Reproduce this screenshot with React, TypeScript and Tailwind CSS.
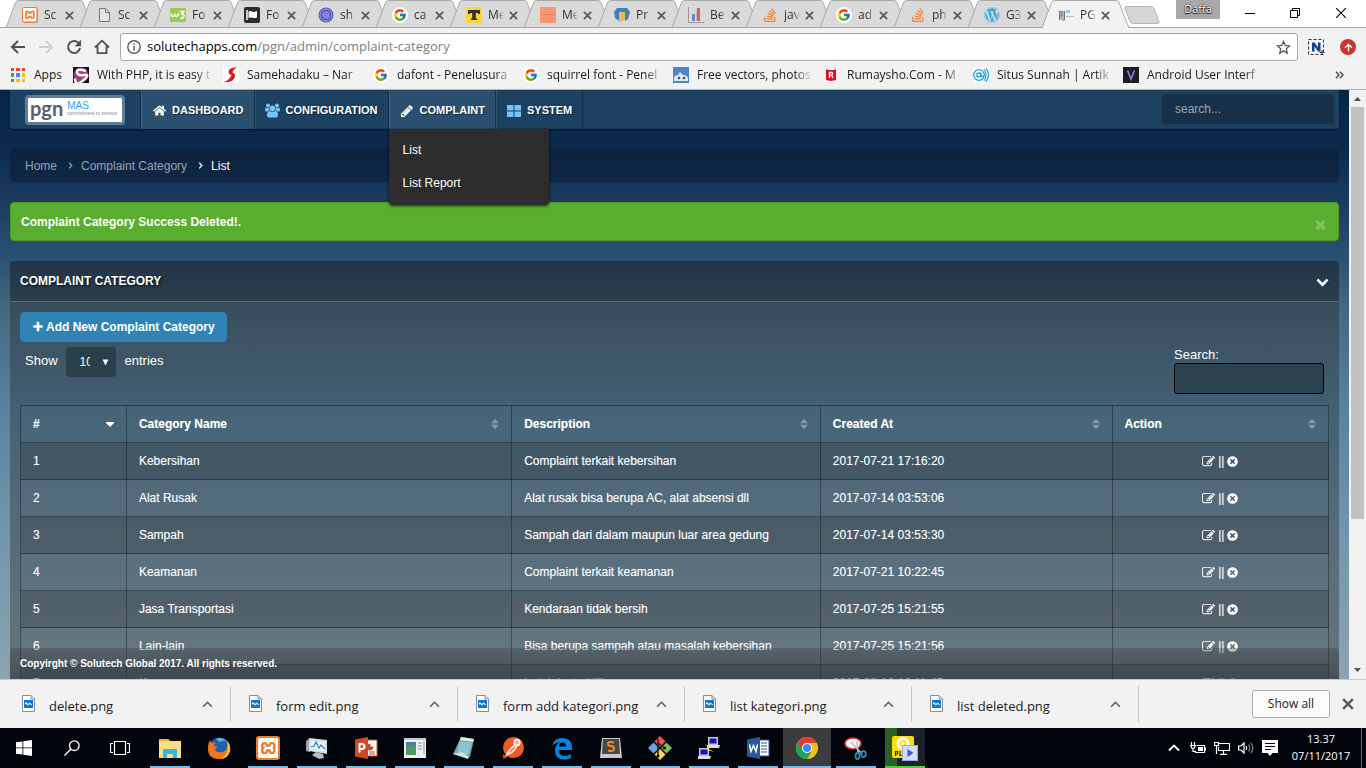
import React from "react";
import { FaArrowUp, FaHome, FaStackOverflow, FaTimesCircle, FaWordpress } from "react-icons/fa";
import { FcGoogle } from "react-icons/fc";
import { SiXampp } from "react-icons/si";

type IconProps = { className?: string };

/* ---------- small drawings ---------- */

const glyph = (d: string, viewBox = "0 0 1792 1792") =>
  function Glyph({ className }: IconProps) {
    return (
      <svg viewBox={viewBox} className={className} fill="currentColor" aria-hidden="true">
        <path d={d} />
      </svg>
    );
  };

const EditIcon = glyph(
  "M888 1184l116-116-152-152-116 116v56h96v96h56zm440-720q-16-16-33 1l-350 350q-17 17-1 33t33-1l350-350q17-17 1-33zm80 594v190q0 119-84.5 203.5t-203.5 84.5h-832q-119 0-203.5-84.5t-84.5-203.5v-832q0-119 84.5-203.5t203.5-84.5h832q63 0 117 25 15 7 18 23 3 17-9 29l-49 49q-14 14-32 8-23-6-45-6h-832q-66 0-113 47t-47 113v832q0 66 47 113t113 47h832q66 0 113-47t47-113v-126q0-13 9-22l64-64q15-15 35-7t20 29zm-96-738l288 288-672 672h-288v-288zm444 132l-92 92-288-288 92-92q28-28 68-28t68 28l152 152q28 28 28 68t-28 68z",
);
const TimesIcon = glyph(
  "M1490 1322q0 40-28 68l-136 136q-28 28-68 28t-68-28l-294-294-294 294q-28 28-68 28t-68-28l-136-136q-28-28-28-68t28-68l294-294-294-294q-28-28-28-68t28-68l136-136q28-28 68-28t68 28l294 294 294-294q28-28 68-28t68 28l136 136q28 28 28 68t-28 68l-294 294 294 294q28 28 28 68z",
);
const PlusIcon = glyph(
  "M1600 736v192q0 40-28 68t-68 28h-416v416q0 40-28 68t-68 28h-192q-40 0-68-28t-28-68v-416h-416q-40 0-68-28t-28-68v-192q0-40 28-68t68-28h416v-416q0-40 28-68t68-28h192q40 0 68 28t28 68v416h416q40 0 68 28t28 68z",
);
const ChevronDownIcon = glyph(
  "M1683 808l-742 741q-19 19-45 19t-45-19l-742-741q-19-19-19-45.5t19-45.5l166-165q19-19 45-19t45 19l531 531 531-531q19-19 45-19t45 19l166 165q19 19 19 45.5t-19 45.5z",
);
const UsersIcon = glyph(
  "M593 896q-162 5-265 128h-134q-82 0-138-40.5t-56-118.5q0-353 124-353 6 0 43.5 21t97.5 42.5 119 21.5q67 0 133-23-5 37-5 66 0 139 81 256zm1071 637q0 120-73 189.5t-194 69.5h-874q-121 0-194-69.5t-73-189.5q0-53 3.5-103.5t14-109 26.5-108.500 43-97.500 62-81 85.500-53.500 111.500-20q10 0 43 21.500t73 48 107 48 135 21.500 135-21.500 107-48 73-48 43-21.500q61 0 111.500 20t85.500 53.500 62 81 43 97.500 26.500 108.500 14 109 3.500 103.500zm-1024-1277q0 106-75 181t-181 75-181-75-75-181 75-181 181-75 181 75 75 181zm704 384q0 159-112.500 271.500t-271.500 112.500-271.500-112.500-112.500-271.500 112.500-271.500 271.500-112.500 271.500 112.500 112.500 271.500zm576 225q0 78-56 118.500t-138 40.500h-134q-103-123-265-128 81-117 81-256 0-29-5-66 66 23 133 23 59 0 119-21.500t97.500-42.500 43.500-21q124 0 124 353zm-128-609q0 106-75 181t-181 75-181-75-75-181 75-181 181-75 181 75 75 181z",
  "0 0 1920 1792",
);
const PencilIcon = glyph(
  "M491 1536l91-91-235-235-91 91v107h128v128h107zm523-928q0-22-22-22-10 0-17 7l-542 542q-7 7-7 17 0 22 22 22 10 0 17-7l542-542q7-7 7-17zm-54-192l416 416-832 832h-416v-416zm683 96q0 53-37 90l-166 166-416-416 166-165q36-38 90-38 53 0 91 38l235 234q37 39 37 91z",
);

const PageIcon = () => (
  <svg viewBox="0 0 16 16" className="size-4">
    <path d="M3.5 1.5h6l4 4v9h-10z" fill="#e4e4e4" stroke="#777" />
    <path d="M9.5 1.5v4h4" fill="none" stroke="#777" />
  </svg>
);

const XamppIcon = ({ className = "size-4" }: IconProps) => (
  <span className={`${className} flex items-center justify-center rounded-[3px] bg-[#f27a2c] text-white`}>
    <SiXampp className="size-[85%]" />
  </span>
);

const GoogleIcon = () => (
  <span className="flex size-4 items-center justify-center rounded-full bg-white">
    <FcGoogle className="size-[14px]" />
  </span>
);

const W3Icon = () => (
  <svg viewBox="0 0 16 16" className="size-4">
    <rect y="1" width="16" height="14" rx="1" fill="#9bcb52" />
    <path d="M1 6.500q.3 3 1.800 3T4.800 6.500q.2 3 1.800 3T8.500 6M10 4.500h4L11.800 7q2.500 0 2.200 2.200-.5 2-3.500 2" fill="none" stroke="#fff" strokeWidth="1.500" />
  </svg>
);

const FlagIcon = () => (
  <svg viewBox="0 0 16 16" className="size-4">
    <rect width="16" height="16" rx="2" fill="#2d2d2d" />
    <path d="M3 3v10" stroke="#fff" strokeWidth="1.500" />
    <path d="M4.500 4.500q2-1 3.500 0t5-.5v6.500q-3 1-4.500.3t-4 .2z" fill="#fff" />
  </svg>
);

const RingIcon = () => (
  <svg viewBox="0 0 16 16" className="size-4">
    <circle cx="8" cy="8" r="7.500" fill="#4c51b5" />
    <circle cx="8" cy="8" r="6" fill="none" stroke="#a9abdf" />
    <circle cx="8" cy="8" r="4" fill="#7f86e6" />
  </svg>
);

const LetterTIcon = () => (
  <svg viewBox="0 0 16 16" className="size-4">
    <rect width="16" height="16" fill="#fbd92c" />
    <path d="M2 3h12v4h-2V6H9.800v5.500H11V13H5v-1.500h1.200V6H4v1H2z" fill="#333" />
  </svg>
);

const SalmonIcon = () => (
  <svg viewBox="0 0 16 16" className="size-4">
    <rect width="16" height="16" fill="#ff9470" />
    <path d="M1 7.500h14" stroke="#c97e67" strokeDasharray="2 .5" />
  </svg>
);

const ShieldIcon = () => (
  <svg viewBox="0 0 16 16" className="size-4">
    <path d="M3 1h10l3 4-2 7-3 2V5H5v9l-4-3L0 5z" fill="#3d7fb9" />
    <path d="M5 5h6v7l-4 3H5z" fill="#f6b84b" />
  </svg>
);

const BarsIcon = () => (
  <svg viewBox="0 0 16 16" className="size-4">
    <path d="M.5 0v15.500H16" fill="none" stroke="#999" />
    <path d="M4 7h3v7H4z" fill="#5d8fd0" />
    <path d="M8 4h1v10H8z" fill="#bbb" />
    <path d="M9 1h3v13H9z" fill="#c7675f" />
  </svg>
);

const PgnFavicon = () => (
  <svg viewBox="0 0 16 16" className="size-4">
    <path d="M1 4h5v9H1z" fill="#b7bcc1" />
    <path d="M1.500 4v9M1.500 4.500h2.500v4.500H1.500M6.500 4v9H4.500" fill="none" stroke="#68737d" />
    <path d="M8 4.500h4" stroke="#8ecbea" strokeWidth="3" />
    <path d="M8 9.500h8" stroke="#bbb" />
  </svg>
);

const FileThumb = () => (
  <svg viewBox="0 0 13 17" className="h-[17px] w-[13px] shrink-0">
    <path d="M.5.5h8.500l3.500 3.500v12.500H.5z" fill="#fff" stroke="#8d8d8d" />
    <path d="M9 .5V4h3.500" fill="none" stroke="#8d8d8d" />
    <path d="M2 5h9v8H2z" fill="#0b78d7" />
    <path d="M3 9.500V7.500l1.500 0L6 9l1.500-1.500L10 9.500v.8L7.500 9 6 10.500 4.500 9z" fill="#fff" />
  </svg>
);

const Cross = ({ className }: IconProps) => (
  <svg viewBox="0 0 10 10" className={className}>
    <path d="M1 1l8 8M9 1L1 9" stroke="currentColor" strokeWidth="2" fill="none" />
  </svg>
);

const UpChevron = ({ className }: IconProps) => (
  <svg viewBox="0 0 12 8" className={className}>
    <path d="M1 6.500l5-5 5 5" stroke="currentColor" strokeWidth="1.800" fill="none" />
  </svg>
);

const GridIcon = () => (
  <svg viewBox="0 0 14 12" className="h-3 w-[14px]">
    <path d="M0 0h6.500v5.500H0zM7.500 0H14v5.500H7.500zM0 6.500h6.500V12H0zM7.500 6.500H14V12H7.500z" fill="currentColor" />
  </svg>
);

/* ---------- browser chrome ---------- */

const tabs: { label: string; icon: React.ReactNode }[] = [
  { label: "Sc", icon: <XamppIcon /> },
  { label: "Sc", icon: <PageIcon /> },
  { label: "Fo", icon: <W3Icon /> },
  { label: "Fo", icon: <FlagIcon /> },
  { label: "sh", icon: <RingIcon /> },
  { label: "ca", icon: <GoogleIcon /> },
  { label: "Me", icon: <LetterTIcon /> },
  { label: "Me", icon: <SalmonIcon /> },
  { label: "Pr", icon: <ShieldIcon /> },
  { label: "Be", icon: <BarsIcon /> },
  { label: "jav", icon: <FaStackOverflow className="size-4 text-[#f08838]" /> },
  { label: "ad", icon: <GoogleIcon /> },
  { label: "ph", icon: <FaStackOverflow className="size-4 text-[#f08838]" /> },
  { label: "G3", icon: <FaWordpress className="size-4 text-[#2fa9d8]" /> },
  { label: "PG", icon: <PgnFavicon /> },
];

function TabStrip() {
  return (
    <div className="flex h-7 shrink-0 bg-white shadow-[inset_0_-1px_0_#a5a5a5]">
      <div className="flex min-w-0 pl-[6px]" role="tablist">
        {tabs.map((tab, i) => {
          const active = i === tabs.length - 1;
          return (
            <div key={i} role="tab" aria-selected={active} className="relative flex h-7 w-[74px] shrink-0 items-center pl-4">
              <svg viewBox="0 0 88 28" className="absolute top-0 left-0 h-7 w-[88px]">
                <path d="M0 28L9.500 2.500Q10.500.5 12.500.5H74q2 0 3 2L87 28z" fill={active ? "#f2f2f2" : "#dadada"} />
                <path d="M0 28L9.500 2.500Q10.500.5 12.500.5H74q2 0 3 2L87 28" fill="none" stroke="#a9a9a9" />
                {!active && <path d="M0 27.500h88" stroke="#a5a5a5" />}
              </svg>
              <span className="relative mt-[2px] shrink-0">{tab.icon}</span>
              <span className="relative mt-[2px] ml-[6px] w-4 shrink-0 text-[12px] whitespace-nowrap text-[#333] [mask-image:linear-gradient(90deg,#000_60%,transparent)]">
                {tab.label}
              </span>
              <button aria-label="Close tab" className="relative mt-[2px] ml-[5px] shrink-0 text-[#5a5a5a]">
                <Cross className="size-[9px]" />
              </button>
            </div>
          );
        })}
      </div>
      <button aria-label="New tab" className="ml-[7px] flex items-center pb-px pl-[1px]">
        <svg viewBox="0 0 36 18" className="mt-[3px] h-[18px] w-9">
          <path d="M2 .5h25q2 0 3 2l5 13q.5 2-1.500 2H9q-2 0-3-2L1 2.500Q.5.5 2 .5z" fill="#d6d6d6" stroke="#b5b5b5" />
        </svg>
      </button>
      <div className="ml-auto flex items-start">
        <div className="mr-[6px] h-[19px] w-11 bg-[#a9a9a9] text-center text-[11px] leading-[18px] text-white [text-shadow:0_0_2px_#000,0_1px_1px_#000]">
          Daffa
        </div>
        <button aria-label="Minimize" className="flex h-[26px] w-12 items-center justify-center">
          <svg viewBox="0 0 10 10" className="size-[10px]"><path d="M0 5.500h10" stroke="#000" /></svg>
        </button>
        <button aria-label="Restore" className="flex h-[26px] w-[42px] items-center justify-center">
          <svg viewBox="0 0 10 10" className="size-[10px]"><path d="M.5 2.500h7v7h-7zM2.500 2.500v-2h7v7h-2" fill="none" stroke="#000" /></svg>
        </button>
        <button aria-label="Close" className="flex h-[26px] w-[50px] items-center justify-center">
          <svg viewBox="0 0 10 10" className="size-[10px]"><path d="M0 0l10 10M10 0L0 10" stroke="#000" strokeWidth="1.100" /></svg>
        </button>
      </div>
    </div>
  );
}

function AddressBar() {
  return (
    <div className="flex h-[38px] shrink-0 items-center bg-[#f2f2f2] pr-[10px] pl-[10px]">
      <button aria-label="Back" className="mr-3 text-[#505050]">
        <svg viewBox="0 0 16 16" className="size-4"><path d="M15 8H2M8 2L2 8l6 6" fill="none" stroke="currentColor" strokeWidth="2" /></svg>
      </button>
      <button aria-label="Forward" className="mr-3 text-[#d0d0d0]">
        <svg viewBox="0 0 16 16" className="size-4"><path d="M1 8h13M8 2l6 6-6 6" fill="none" stroke="currentColor" strokeWidth="2" /></svg>
      </button>
      <button aria-label="Reload" className="mr-3 text-[#505050]">
        <svg viewBox="0 0 16 16" className="size-4"><path d="M13 4.500A6 6 0 1 0 14 9" fill="none" stroke="currentColor" strokeWidth="2" /><path d="M15 .8v6.400H8.600z" fill="currentColor" /></svg>
      </button>
      <button aria-label="Home" className="mr-[10px] text-[#505050]">
        <svg viewBox="0 0 16 16" className="size-4"><path d="M1 8.500L8 1.700l7 6.800M3.500 7v7.200h9V7" fill="none" stroke="currentColor" strokeWidth="1.800" /></svg>
      </button>
      <div className="flex h-7 min-w-0 flex-1 items-center rounded-[3px] border border-[#a8a8a8] bg-white pr-[6px] pl-[6px]">
        <svg viewBox="0 0 14 14" className="size-[14px] shrink-0"><circle cx="7" cy="7" r="6.200" fill="none" stroke="#5a5a5a" strokeWidth="1.400" /><path d="M7 6v4.500M7 3.300v1.500" stroke="#5a5a5a" strokeWidth="1.500" /></svg>
        <div className="ml-[6px] flex-1 truncate text-[13px] text-[#808080]">
          <span className="text-black">solutechapps.com</span>/pgn/admin/complaint-category
        </div>
        <button aria-label="Bookmark this page">
          <svg viewBox="0 0 16 16" className="size-[15px]"><path d="M8 1.500l1.900 4.300 4.600.5-3.500 3.100 1 4.600L8 11.600 4 14l1-4.600L1.500 6.300l4.600-.5z" fill="none" stroke="#5a5a5a" strokeWidth="1.400" /></svg>
        </button>
      </div>
      <button aria-label="Capture extension" className="ml-[10px]">
        <svg viewBox="0 0 17 17" className="size-[17px]"><path d="M.5.5h15v15H.5z" fill="none" stroke="#333" strokeDasharray="3 2" /><path d="M4 12.500v-9h2.500l3.500 5v-5h2.500v9H10l-3.500-5v5z" fill="#12438f" /><path d="M14 11v5M11.500 13.500h5" stroke="#333" /></svg>
      </button>
      <button aria-label="Update" className="ml-[15px] flex size-4 items-center justify-center rounded-full bg-[#c8372d] text-white">
        <FaArrowUp className="size-[9px]" />
      </button>
    </div>
  );
}

const bookmarks: { label: string; icon: React.ReactNode }[] = [
  {
    label: "With PHP, it is easy t",
    icon: <svg viewBox="0 0 16 16" className="size-4"><rect width="16" height="16" fill="#111" /><circle cx="8" cy="8" r="7.500" fill="#a8387c" /><path d="M13 4Q4 1 4 5t7 3-1 5.500-8-2" fill="none" stroke="#fff" strokeWidth="2.500" /></svg>,
  },
  {
    label: "Samehadaku – Nar",
    icon: <svg viewBox="0 0 16 16" className="size-4"><rect width="16" height="16" fill="#fff" /><path d="M14.500 .5Q6 0 5.500 4.500q0 3 3 3.500Q7 12.500 1 15q9.500 1 11-5.500.5-3-2.500-4 .5-3.500 5-5z" fill="#dc1f12" /></svg>,
  },
  { label: "dafont - Penelusura", icon: <GoogleIcon /> },
  { label: "squirrel font - Penel", icon: <GoogleIcon /> },
  {
    label: "Free vectors, photos",
    icon: <svg viewBox="0 0 16 16" className="size-4"><rect width="16" height="16" fill="#4b86c8" /><path d="M1 14q-1-6 4-6l2-3 3 3q6 0 5 6z" fill="#dfe7ee" /><circle cx="6" cy="11" r="1.300" fill="#456" /><circle cx="11" cy="11" r="1.300" fill="#456" /></svg>,
  },
  {
    label: "Rumaysho.Com - M",
    icon: <svg viewBox="0 0 16 16" className="size-4"><path d="M3 2l2 1h6l2-1v11l-5 1-5-1z" fill="#e01020" /><path d="M6.500 11V5.500H9q1.200 1.300 0 2.600H6.500M8.500 8l1.500 3" fill="none" stroke="#fff" strokeWidth="1.300" /></svg>,
  },
  {
    label: "Situs Sunnah | Artik",
    icon: <svg viewBox="0 0 16 16" className="size-4"><rect width="16" height="16" fill="#fff" /><circle cx="6" cy="8" r="5.300" fill="#fff" stroke="#1ba0dc" strokeWidth="1.300" /><circle cx="5.800" cy="8" r="2" fill="none" stroke="#1ba0dc" strokeWidth="1.300" /><path d="M8 5.500v4q1.500 1 2-1M11 2q4 6 0 12M13 1q5 7 0 14" fill="none" stroke="#1ba0dc" strokeWidth="1.200" /></svg>,
  },
  {
    label: "Android User Interf",
    icon: <svg viewBox="0 0 16 16" className="size-4"><rect width="16" height="16" fill="#1d1d20" /><path d="M4.500 3.500L8 12l3.500-8.500" fill="none" stroke="#8b7cf0" strokeWidth="1.700" /></svg>,
  },
];

const appDots = ["#e94335", "#e94335", "#e94335", "#34a853", "#4285f4", "#fbbc05", "#34a853", "#fbbc05", "#fbbc05"];

function BookmarksBar() {
  return (
    <nav aria-label="Bookmarks" className="flex h-6 shrink-0 items-center border-b border-[#b3b3b3] bg-[#f2f2f2] pr-[22px] pb-[5px] pl-[11px] text-[12px] text-[#1a1a1a]">
      <a href="#apps" className="flex w-[62px] shrink-0 items-center gap-[9px]">
        <span className="grid size-[14px] grid-cols-3 gap-[2px]">
          {appDots.map((c, i) => (
            <span key={i} style={{ backgroundColor: c }} />
          ))}
        </span>
        Apps
      </a>
      <div className="flex min-w-0 flex-1">
        {bookmarks.map((b) => (
          <a key={b.label} href="#bookmark" className="flex w-[150px] shrink-0 items-center gap-2">
            <span className="shrink-0">{b.icon}</span>
            <span className="w-[116px] whitespace-nowrap [mask-image:linear-gradient(90deg,#000_85%,transparent)]">{b.label}</span>
          </a>
        ))}
      </div>
      <button aria-label="More bookmarks" className="text-[#505050]">
        <svg viewBox="0 0 9 8" className="h-2 w-[9px]"><path d="M1 .8L4 4 1 7.200M5 .8L8 4 5 7.200" fill="none" stroke="currentColor" strokeWidth="1.500" /></svg>
      </button>
    </nav>
  );
}

/* ---------- admin page ---------- */

const menu: { label: string; icon: React.ReactNode; lit?: boolean; items?: string[] }[] = [
  { label: "DASHBOARD", icon: <FaHome className="size-[13px]" />, lit: true },
  { label: "CONFIGURATION", icon: <UsersIcon className="size-[15px] text-[#74c4f5]" /> },
  { label: "COMPLAINT", icon: <PencilIcon className="size-[14px]" />, lit: true, items: ["List", "List Report"] },
  { label: "SYSTEM", icon: <span className="text-[#74c4f5]"><GridIcon /></span> },
];

function NavBar() {
  return (
    <nav className="relative z-10 flex h-[39px] items-stretch rounded-b-[3px] bg-[#204564] bg-[image:conic-gradient(rgba(0,0,0,.22)_25%,transparent_0)] bg-[size:2px_2px] shadow-[0_1px_2px_rgba(0,0,0,.6)]">
      <a href="#home" className="flex w-[130px] items-center justify-center pt-[1px]">
        <span className="flex h-[30px] w-[100px] items-center rounded-[4px] border-[3px] border-[#5f7d98] bg-white pl-[2px] text-[#56616c]">
          <span className="pb-[5px] text-[20px] leading-[20px] font-bold [font-family:Lato,sans-serif]">pgn</span>
          <span className="ml-1 flex flex-col gap-px pb-[3px]">
            <span className="text-[10px] leading-[9px] text-[#2aa7e0]">MAS</span>
            <span className="text-[5px] leading-[5px] whitespace-nowrap text-[#8b8b8b]">commitment to service</span>
          </span>
        </span>
      </a>
      <ul className="flex">
        {menu.map((m) => (
          <li key={m.label} className={`relative border-l border-[#122f49] ${m.lit ? "bg-[#7fa7c5]/15" : ""}`}>
            <a href="#menu" className="flex h-full items-center border-l border-white/10 pt-[2px] pr-[10px] pl-[9px] text-[11px] font-bold text-white [text-shadow:1px_1px_1px_rgba(0,0,0,.5)]">
              <span className="mr-[5px] flex w-4 justify-center">{m.icon}</span>
              {m.label}
            </a>
            {m.items && (
              <ul className="absolute top-[39px] left-0 w-40 rounded-b-[4px] bg-[#303030] bg-[image:conic-gradient(rgba(0,0,0,.3)_25%,transparent_0)] bg-[size:2px_2px] py-[5px] text-[12px] text-white shadow-[0_1px_3px_rgba(0,0,0,.8)]">
                {m.items.map((t) => (
                  <li key={t}>
                    <a href="#sub" className="block px-[14px] text-[12px] leading-[33px]">{t}</a>
                  </li>
                ))}
              </ul>
            )}
          </li>
        ))}
        <li className="border-l border-[#122f49]" />
      </ul>
      <input
        type="text"
        aria-label="Search site"
        placeholder="search..."
        className="mt-1 mr-[5px] ml-auto h-[30px] w-[172px] rounded-[4px] bg-black/25 px-[13px] text-[12px] text-white outline-none placeholder:text-[#9fa6ad]"
      />
    </nav>
  );
}

const rows = [
  ["1", "Kebersihan", "Complaint terkait kebersihan", "2017-07-21 17:16:20"],
  ["2", "Alat Rusak", "Alat rusak bisa berupa AC, alat absensi dll", "2017-07-14 03:53:06"],
  ["3", "Sampah", "Sampah dari dalam maupun luar area gedung", "2017-07-14 03:53:30"],
  ["4", "Keamanan", "Complaint terkait keamanan", "2017-07-21 10:22:45"],
  ["5", "Jasa Transportasi", "Kendaraan tidak bersih", "2017-07-25 15:21:55"],
  ["6", "Lain-lain", "Bisa berupa sampah atau masalah kebersihan", "2017-07-25 15:21:56"],
  ["7", "Kamar", "Indah lestari lili", "2017-08-16 16:11:45"],
];

const columns = ["#", "Category Name", "Description", "Created At", "Action"];

function SortMark({ first }: { first: boolean }) {
  return first ? (
    <svg viewBox="0 0 8 12" className="h-3 w-2"><path d="M0 4h8v1L4.500 8.500h-1L0 5z" fill="#fff" /></svg>
  ) : (
    <svg viewBox="0 0 8 12" className="h-3 w-2"><path d="M0 5.300h8L4 .8zM0 6.700h8L4 11.200z" fill="#fff" opacity=".35" /></svg>
  );
}

function CategoryTable() {
  return (
    <table className="w-full table-fixed border-collapse text-[12px] text-white [text-shadow:0_0_1px_rgba(255,255,255,.35)]">
      <colgroup>
        <col className="w-[8.1%]" />
        <col className="w-[29.45%]" />
        <col className="w-[23.6%]" />
        <col className="w-[22.3%]" />
        <col className="w-[16.55%]" />
      </colgroup>
      <thead>
        <tr className="h-[37px] bg-[#5a8a9e]/10">
          {columns.map((c, i) => (
            <th key={c} scope="col" className="border border-black/35 px-3 text-left font-bold">
              <span className="flex items-center justify-between">
                {c}
                <SortMark first={i === 0} />
              </span>
            </th>
          ))}
        </tr>
      </thead>
      <tbody>
        {rows.map((r, i) => (
          <tr key={r[0]} className={`h-[37px] ${i % 2 === 0 ? "bg-[#1c2426]/20" : "bg-[#6a8ca0]/10"}`}>
            {r.map((cell) => (
              <td key={cell} className="border border-black/35 px-3">{cell}</td>
            ))}
            <td className="border border-black/35 px-3">
              <span className="flex items-center justify-center gap-[3px]">
                <a href="#edit" aria-label="Edit"><EditIcon className="size-[13px]" /></a>
                ||
                <a href="#delete" aria-label="Delete"><FaTimesCircle className="size-[11px]" /></a>
              </span>
            </td>
          </tr>
        ))}
      </tbody>
    </table>
  );
}

function AdminPage() {
  return (
    <div className="relative min-w-0 flex-1 overflow-hidden bg-[linear-gradient(180deg,#082545_0,#0b2a4e_60px,#1a3a5f_110px,#2a5072_165px,#46687f_220px,#5783a0_320px,#7295ab_440px,#8ba4b0_589px)] px-[10px] [font-family:'Liberation_Sans',Arial,sans-serif]">
      <NavBar />
      <nav aria-label="Breadcrumb" className="mt-5 flex h-[33px] items-center rounded-[4px] bg-[#0a1a2e]/45 px-[15px] text-[12px] text-[#98a2ad]">
        <a href="#home">Home</a>
        <svg viewBox="0 0 5 8" className="mr-2 ml-[11px] h-[7px] w-[5px]"><path d="M1 .8L4 4 1 7.200" fill="none" stroke="currentColor" strokeWidth="1.400" /></svg>
        <a href="#category">Complaint Category</a>
        <svg viewBox="0 0 5 8" className="mr-2 ml-[11px] h-[7px] w-[5px] text-white"><path d="M1 .8L4 4 1 7.200" fill="none" stroke="currentColor" strokeWidth="1.400" /></svg>
        <span className="text-white">List</span>
      </nav>

      <div role="alert" className="mt-5 flex h-[39px] items-center justify-between rounded-[4px] border border-[#4d9a27] bg-[#5aae2f] px-[10px] text-[12px] font-bold text-white">
        Complaint Category Success Deleted!.
        <button aria-label="Dismiss" className="mt-[6px] text-white/25"><TimesIcon className="size-[15px]" /></button>
      </div>

      <section className="mt-5 rounded-t-[4px] bg-[#1f1f1f]/35">
        <header className="flex h-[41px] items-center justify-between rounded-t-[4px] border-b border-[#46708f] bg-[#151d2c]/30 px-[10px] text-white">
          <h1 className="text-[12px] font-bold [text-shadow:1px_1px_2px_rgba(0,0,0,.8)]">COMPLAINT CATEGORY</h1>
          <button aria-label="Collapse panel"><ChevronDownIcon className="size-[13px]" /></button>
        </header>
        <div className="p-[10px]">
          <button className="flex h-[30px] items-center gap-[2px] rounded-[5px] bg-[#2f84b5] px-3 text-[12px] font-bold text-white">
            <PlusIcon className="size-3" />
            Add New Complaint Category
          </button>
          <div className="flex h-[63px] items-start justify-between px-[5px] pt-[5px] text-[13px] text-white">
            <label className="flex items-center">
              <span className="mb-[3px]">Show</span>
              <span className="relative mr-[9px] ml-2 flex">
                <select defaultValue="10" className="h-[30px] w-[50px] appearance-none rounded-[4px] bg-[#1c3039]/60 pr-[26px] pl-[14px] text-[12px] text-white outline-none">
                  <option>10</option>
                  <option>25</option>
                  <option>50</option>
                </select>
                <svg viewBox="0 0 7 7" className="pointer-events-none absolute top-[12px] right-[7px] size-[7px]"><path d="M.5.5h6L3.500 6.500z" fill="#fff" /></svg>
              </span>
              <span className="mb-[3px]">entries</span>
            </label>
            <label className="flex w-[150px] flex-col">
              <span className="leading-4">Search:</span>
              <input type="text" className="h-[31px] rounded-[3px] border border-black bg-[#1c3039]/55 px-2 text-[12px] text-white outline-none" />
            </label>
          </div>
          <CategoryTable />
        </div>
      </section>

      <footer className="absolute right-[10px] bottom-0 left-[10px] flex h-[31px] items-center rounded-t-[3px] bg-[linear-gradient(180deg,rgba(51,51,51,.3),rgba(43,43,50,.5))] px-[10px] text-[10px] font-bold text-white">
        Copyirght © Solutech Global 2017. All rights reserved.
      </footer>
    </div>
  );
}

function ScrollBar() {
  return (
    <div className="flex w-[17px] shrink-0 flex-col items-center bg-[#f1f1f1]">
      <svg viewBox="0 0 17 17" className="size-[17px]"><path d="M5 11h7L8.500 7z" fill="#505050" /></svg>
      <div className="h-[70%] w-[13px] bg-[#c1c1c1]" />
      <svg viewBox="0 0 17 17" className="mt-auto size-[17px]"><path d="M5 6h7L8.500 10z" fill="#505050" /></svg>
    </div>
  );
}

/* ---------- downloads and taskbar ---------- */

const downloads = ["delete.png", "form edit.png", "form add kategori.png", "list kategori.png", "list deleted.png"];

function DownloadShelf() {
  return (
    <div className="flex h-[49px] shrink-0 items-center border-t border-[#c8c8c8] bg-[#f2f2f2] pl-1 text-[13px] text-[#1a1a1a]">
      {downloads.map((d) => (
        <div key={d} className="flex h-9 w-[227px] shrink-0 items-center border-r border-[#c6c6c6] pr-[17px] pl-[18px]">
          <span className="mb-[2px]"><FileThumb /></span>
          <span className="mt-[5px] ml-[14px] flex-1 truncate">{d}</span>
          <button aria-label="Download options" className="text-[#5a5a5a]"><UpChevron className="h-[7px] w-[11px]" /></button>
        </div>
      ))}
      <button className="ml-auto h-7 w-[78px] shrink-0 rounded-[3px] border border-[#ababab] bg-[#fbfbfb] text-[12px]">Show all</button>
      <button aria-label="Close downloads" className="mr-[12px] ml-[12px] text-[#5a5a5a]"><Cross className="size-3" /></button>
    </div>
  );
}

type Task = { name: string; icon: React.ReactNode; open?: boolean; active?: boolean; player?: boolean };

const tasks: Task[] = [
  {
    name: "File Explorer", open: true,
    icon: <svg viewBox="0 0 24 24" className="size-6"><path d="M1 3h9l2 2h11v17H1z" fill="#f9df82" /><path d="M1 3h9l2 2H1z" fill="#e9b93c" /><path d="M5 22v-9h14v9h-4v-4H9v4z" fill="#2fb5ea" /></svg>,
  },
  {
    name: "Firefox",
    icon: <svg viewBox="0 0 24 24" className="size-6"><circle cx="12.500" cy="12" r="10.500" fill="#1d62ae" /><path d="M9 3q6-3 10 2-4-1-6 1z" fill="#5fb4ea" /><path d="M3 4q0 2 2 3 2-1 4 0-2 1-2 3l4 1-3 2q1 4 5 3 6 1 7-5 1-5-3-8 6 3 6 9 0 11-11 11T1 13q0-6 2-9z" fill="#ee7420" /><path d="M20 5q4 5 3 10-2 7-10 8 8-4 8-11 0-4-1-7z" fill="#fbc734" /></svg>,
  },
  { name: "XAMPP", open: true, icon: <XamppIcon className="size-6" /> },
  {
    name: "Task Monitor", open: true,
    icon: <svg viewBox="0 0 24 24" className="size-6"><path d="M1 5l4-3v14l-4-1z" fill="#9ca5ab" /><path d="M4 2l18 2v14L4 15z" fill="#d8dde0" /><path d="M6 4.500l14 1.500v9.500L6 13z" fill="#edf6fb" /><path d="M6 11l3-1 2-4 3 6 2-3 4 4" fill="none" stroke="#248bc7" strokeWidth="1.300" /><path d="M7 19l4-3 7 2 1 4-5 1z" fill="#b8bec2" /></svg>,
  },
  {
    name: "PowerPoint", open: true,
    icon: <svg viewBox="0 0 24 24" className="size-6"><path d="M13 4h10v16H13z" fill="#fff" stroke="#d24726" /><path d="M16 8a3 3 0 1 0 3 3h-3zM15 16h6M15 18h6" fill="#d24726" stroke="#d24726" /><path d="M1 3.500L14 1v22L1 20.500z" fill="#d24726" /><path d="M5.500 16.500V8H8q2.500.2 2.500 2.500T8 13H6" fill="none" stroke="#fff" strokeWidth="2" /></svg>,
  },
  {
    name: "Report Viewer", open: true,
    icon: <svg viewBox="0 0 24 24" className="size-6"><path d="M1 2h22v20H1z" fill="#edf0f2" /><path d="M1 2h22v2H1z" fill="#c4cbd0" /><path d="M3 6h10v13H3z" fill="#4c7fb0" /><path d="M3 11l10-2v10H3z" fill="#519761" /><path d="M15 7h4M15 10h4M15 13h4M21 5v13" stroke="#8b9297" /></svg>,
  },
  {
    name: "Notepad", open: true,
    icon: <svg viewBox="0 0 24 24" className="size-6"><path d="M9 1l13 2-4 18L1 18z" fill="#69a6b6" /><path d="M9 1l13 2-1 3L8 4z" fill="#d9edf2" /><path d="M8 5l12 2-4 12-11-3z" fill="#8cc4cf" /><path d="M1 18l9-2 7 5-1 2z" fill="#d5e7e9" /></svg>,
  },
  {
    name: "Postman", open: true,
    icon: <svg viewBox="0 0 24 24" className="size-6"><circle cx="12.500" cy="11.500" r="10.500" fill="#f15a24" /><path d="M2 18v5l5-2z" fill="#d64216" /><circle cx="16" cy="6.500" r="3" fill="#f7b79c" stroke="#fff" strokeWidth="1.300" /><path d="M14 9q-4 2-6.500 6.500L5.500 19l5.500-2.500Q15 13 15.500 10" fill="#f5926b" stroke="#fff" strokeWidth="1.300" /></svg>,
  },
  {
    name: "Edge", open: true,
    icon: <svg viewBox="0 0 24 24" className="size-6"><path d="M2 11Q3 2 12.500 2 22 2 22 12v2H9q0 6 6 6 3 0 6-2v4q-3 1.500-7 1.500-9 0-9-9 0-6 5-8-7 0-8 4.500zM9 10.500h7q0-4-3.500-4-3 0-3.500 4z" fill="#0c7fdc" /></svg>,
  },
  {
    name: "Sublime Text", open: true,
    icon: <svg viewBox="0 0 24 24" className="size-6"><path d="M3 2h18l2 20H1z" fill="#c9c9c9" /><path d="M4 3h16l1 15H3z" fill="#474747" /><path d="M15 6.500Q9 5 9 7.500t3 2.500 3 3-6 1.500" fill="none" stroke="#f58a25" strokeWidth="2" /></svg>,
  },
  {
    name: "Git", open: true,
    icon: <svg viewBox="0 0 24 24" className="size-6"><path d="M12 0l5.500 5.500L12 11 6.500 5.500z" fill="#ef5350" /><path d="M18.500 6.500L24 12l-5.500 5.500L13 12z" fill="#80bd5a" /><path d="M5.500 6.500L11 12l-5.500 5.500L0 12z" fill="#6f9ee8" /><path d="M12 13l5.500 5.500L12 24l-5.500-5.500z" fill="#fbd35b" /><path d="M10 3v17M10 7l6 5" stroke="#222" strokeWidth="1.500" /><circle cx="10" cy="20" r="1.500" /><circle cx="16.500" cy="12" r="1.500" /></svg>,
  },
  {
    name: "PuTTY", open: true,
    icon: <svg viewBox="0 0 24 24" className="size-6"><path d="M11 1h10v8H11zM2 12h10v8H2z" fill="#c8c8c8" /><path d="M12.500 2.500h7v5h-7zM3.500 13.500h7v5h-7z" fill="#1111c9" /><path d="M10 9h13l-1 3h-12zM1 20h13l-1 3H1z" fill="#dedede" /><path d="M8 8l5 3-3 1 7 4-7-2 2-2z" fill="#f6ed23" /></svg>,
  },
  {
    name: "Word", open: true,
    icon: <svg viewBox="0 0 24 24" className="size-6"><path d="M13 4h10v16H13z" fill="#fff" stroke="#2b579a" /><path d="M15 7h6M15 10h6M15 13h6M15 16h6" stroke="#2b579a" /><path d="M1 3.500L14 1v22L1 20.500z" fill="#2b579a" /><path d="M3.500 8.500L5 15.500l2.500-6 2.500 6 1.500-7" fill="none" stroke="#fff" strokeWidth="1.500" /></svg>,
  },
  {
    name: "Chrome", open: true, active: true,
    icon: <svg viewBox="0 0 24 24" className="size-6"><circle cx="12" cy="12" r="11" fill="#fbc116" /><path d="M12 12L2.500 6.500A11 11 0 0 0 12 23l4-6z" fill="#1da362" /><path d="M12 7h9.800a11 11 0 0 0-.3-.5A11 11 0 0 0 2.500 6.500L7 12z" fill="#e33b2e" /><circle cx="12" cy="12" r="5" fill="#fff" /><circle cx="12" cy="12" r="4" fill="#4285f4" /></svg>,
  },
  {
    name: "Snipping Tool", open: true,
    icon: <svg viewBox="0 0 24 24" className="size-6"><ellipse cx="9" cy="7.500" rx="8" ry="5.500" fill="#f5f1f1" stroke="#c7393f" strokeWidth="1.500" /><path d="M7 6l11 12M13 5l1 13" stroke="#bcc3c8" strokeWidth="1.500" /><ellipse cx="19.500" cy="18" rx="2.300" ry="3" fill="none" stroke="#2d86b5" strokeWidth="1.800" /><ellipse cx="13.500" cy="20" rx="2" ry="3" fill="none" stroke="#2d86b5" strokeWidth="1.800" /></svg>,
  },
  {
    name: "Player", open: true, player: true,
    icon: <svg viewBox="0 0 26 26" className="size-[26px]"><rect width="22" height="22" rx="2" y="1" fill="#fbdc12" /><circle cx="11" cy="8.500" r="5" fill="none" stroke="#fff" strokeWidth="3" /><path d="M9.500 6v5l4-2.500z" fill="#fff" /><path d="M3.500 21v-4.500h2v2.500h-2M8 16v4.500h2" fill="none" stroke="#333" strokeWidth="1.200" /><rect x="10.500" y="10.500" width="15" height="15" fill="#d6dcf6" stroke="#9ea8da" /><path d="M15.500 14v8l6-4z" fill="#4a55c8" /></svg>,
  },
];

function Taskbar() {
  return (
    <div className="flex h-10 shrink-0 bg-[#02060c] text-white">
      <button aria-label="Start" className="flex w-12 shrink-0 items-center justify-center">
        <svg viewBox="0 0 16 16" className="size-4"><path d="M0 2.300l6.500-.9v6.100H0zM7.300 1.300L16 0v7.500H7.300zM0 8.300h6.500v6.300L0 13.700zM7.300 8.300H16V16l-8.700-1.300z" fill="#fff" /></svg>
      </button>
      <button aria-label="Search" className="flex w-12 shrink-0 items-center justify-center">
        <svg viewBox="0 0 16 16" className="size-4"><circle cx="10.300" cy="5.700" r="4.800" fill="none" stroke="#fff" strokeWidth="1.300" /><path d="M7 9L.5 15.500" stroke="#fff" strokeWidth="1.400" /></svg>
      </button>
      <button aria-label="Task view" className="mr-[2px] flex w-12 shrink-0 items-center justify-center">
        <svg viewBox="0 0 20 16" className="h-4 w-5"><path d="M4.500 1.500h11v13h-11zM3 3.500H.5v9H3M17 3.500h2.500v9H17" fill="none" stroke="#fff" strokeWidth="1.200" /></svg>
      </button>
      <div className="flex min-w-0 gap-px">
        {tasks.map((t) => (
          <button
            key={t.name}
            aria-label={t.name}
            className={`relative flex w-12 shrink-0 items-center justify-center ${t.active ? "bg-[#3a3c40]" : ""}`}
          >
            {t.player && <span className="absolute inset-y-0 left-1 w-10 bg-[linear-gradient(90deg,#2c5f28_30%,#1b2229_30%)]" />}
            <span className="relative">{t.icon}</span>
            {t.open && (
              <span className={`absolute bottom-0 h-[2px] ${t.active ? "inset-x-0" : "inset-x-1"} ${t.player ? "bg-[#44d62c]" : "bg-[#76b9ed]"}`} />
            )}
          </button>
        ))}
      </div>
      <div className="ml-auto flex shrink-0 items-center">
        <button aria-label="Show hidden icons" className="mr-[10px]"><UpChevron className="h-2 w-3" /></button>
        <svg viewBox="0 0 16 14" className="mr-2 h-[14px] w-4"><path d="M1.500 1v3M4.500 1v3M0 4.500h6M1 4.500q0 3 2 3t2-3M3 7v3.500h2M6.500 4.500h8v7h-9v-2M15.500 6.500v3" fill="none" stroke="#fff" strokeWidth="1.200" /><path d="M8 6h5v4H8z" fill="#fff" /></svg>
        <svg viewBox="0 0 16 14" className="mr-2 h-[14px] w-4"><path d="M5 2.500h10.500v7H4.500V6M.5 1.500h4v3h-4zM2.500 5v8M9.500 10v3M6 13.400h7" fill="none" stroke="#fff" strokeWidth="1.200" /></svg>
        <svg viewBox="0 0 16 14" className="mr-2 h-[14px] w-4"><path d="M.6 5h2.400l3-3v10L3 9H.6z" fill="none" stroke="#fff" strokeWidth="1.200" /><path d="M8 5q1.500 2 0 4" fill="none" stroke="#fff" strokeWidth="1.200" /><path d="M10.500 3.500q2.500 3.500 0 7M13 2q3.500 5 0 10" fill="none" stroke="#8a8a8a" strokeWidth="1.200" /></svg>
        <svg viewBox="0 0 16 16" className="h-4 w-4"><path d="M0 0h16v13h-5.500L8 16l-2.500-3H0z" fill="#fff" /><path d="M3 3.500h10M3 6.500h10M3 9.500h6" stroke="#02060c" /></svg>
        <div className="mb-[3px] ml-[13px] w-[60px] text-center text-[11px] leading-[17px]">
          <div>13.37</div>
          <div>07/11/2017</div>
        </div>
        <div className="ml-[10px] h-10 w-[5px] border-l border-[#6a6a6a]" />
      </div>
    </div>
  );
}

export default function App() {
  return (
    <div className="flex h-screen flex-col overflow-hidden bg-white [font-family:'Open_Sans','Noto_Sans',sans-serif]">
      <TabStrip />
      <AddressBar />
      <BookmarksBar />
      <main className="flex min-h-0 flex-1">
        <AdminPage />
        <ScrollBar />
      </main>
      <DownloadShelf />
      <Taskbar />
    </div>
  );
}
